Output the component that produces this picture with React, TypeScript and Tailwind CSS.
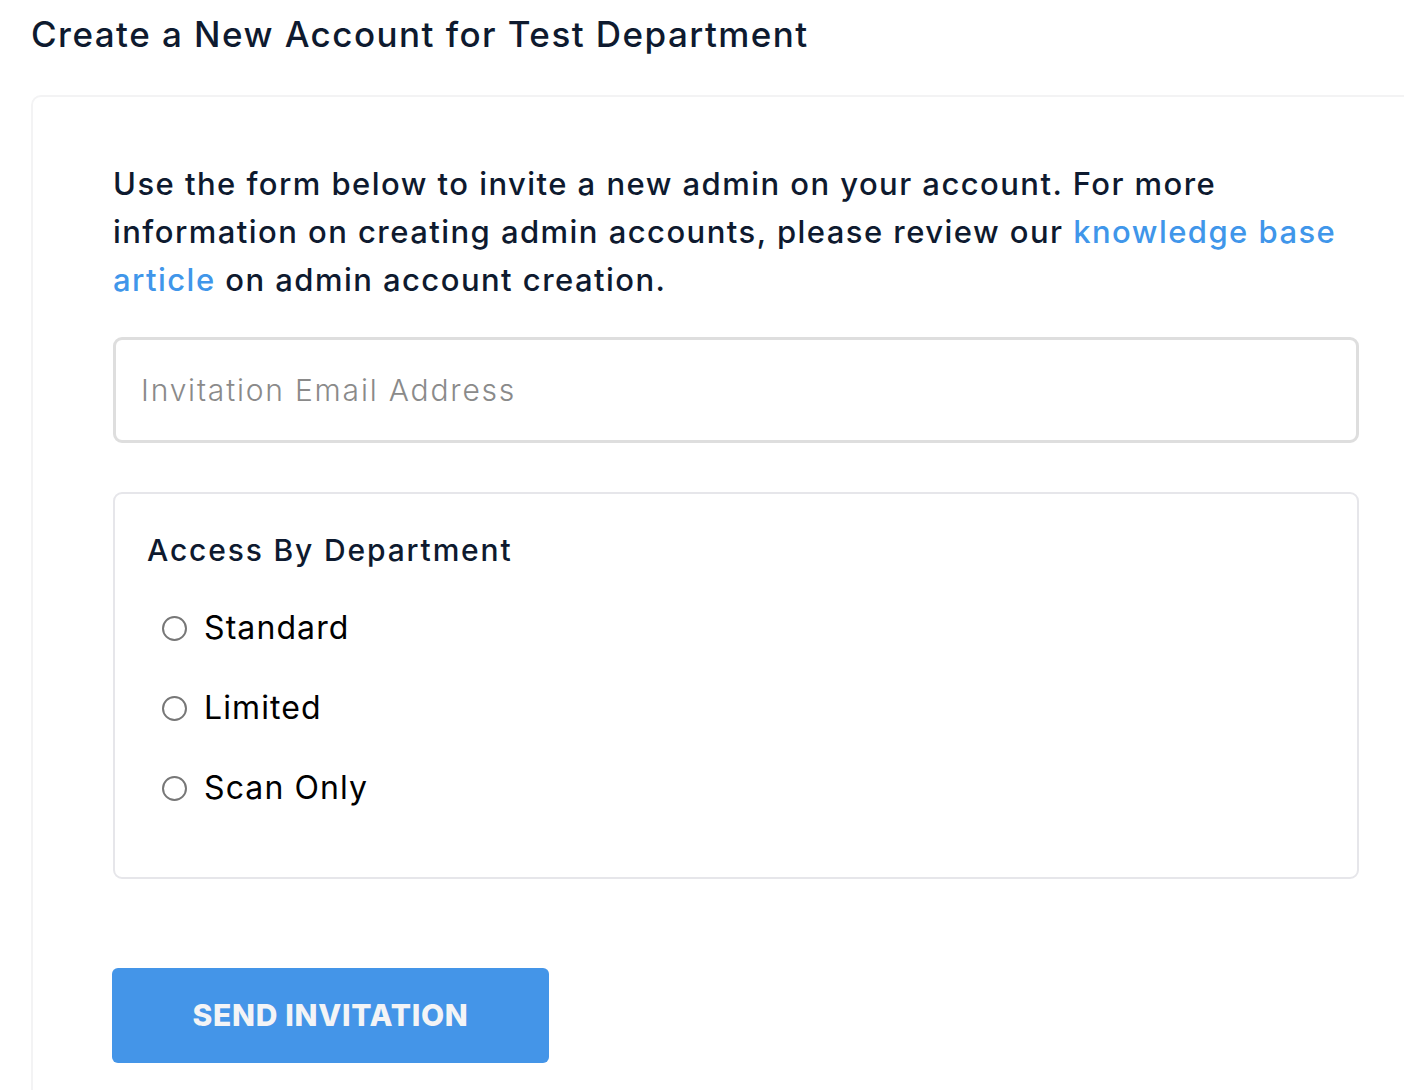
import { useState } from "react";

const OPTIONS = ["Standard", "Limited", "Scan Only"];

export default function App() {
  const [access, setAccess] = useState<string | null>(null);

  return (
    <div className="min-h-screen w-full overflow-hidden bg-white font-['Inter',sans-serif] text-[#0e1a2f]">
      <div className="pl-[31px] pt-[13px]">
        <h1 className="text-[35px] font-medium leading-[42px] tracking-[1.45px]">
          Create a New Account for Test Department
        </h1>
        <div className="mt-[40px] w-[1420px] rounded-[10px] border-2 border-[#f3f3f4] pl-[80px] pt-[63px] pb-[40px]">
          <div className="w-[1246px]">
            <p className="whitespace-nowrap text-[31px] font-medium leading-[48px] tracking-[1.45px]">
              Use the form below to invite a new admin on your account. For more
              <br />
              information on creating admin accounts, please review our{" "}
              <a href="#" className="text-[#4096ea]">
                knowledge base
                <br />
                article
              </a>{" "}
              on admin account creation.
            </p>
            <input
              type="email"
              placeholder="Invitation Email Address"
              className="mt-[33px] h-[106px] w-full rounded-[9px] border-[3px] border-[#dedede] px-[25px] text-[30px] font-light tracking-[1.8px] text-[#333] outline-none placeholder:text-[#8a8a8a]"
            />
            <div className="mt-[49px] rounded-[9px] border-2 border-[#e6e6ea] pl-[32px] pt-[36px] pb-[49px]">
              <div className="text-[30px] font-medium leading-[40px] tracking-[1.85px]">
                Access By Department
              </div>
              <div className="mt-[18px] flex flex-col">
                {OPTIONS.map((o) => (
                  <label
                    key={o}
                    className="flex h-[80px] cursor-pointer items-center pl-[15px]"
                    onClick={() => setAccess(o)}
                  >
                    <span className="flex h-[25px] w-[25px] items-center justify-center rounded-full border-2 border-[#777]">
                      {access === o && (
                        <span className="h-[13px] w-[13px] rounded-full bg-[#4096ea]" />
                      )}
                    </span>
                    <span className="ml-[17px] text-[32px] leading-[40px] tracking-[1.1px] text-black">
                      {o}
                    </span>
                  </label>
                ))}
              </div>
            </div>
            <button className="mt-[89px] ml-[-1px] flex h-[95px] w-[437px] items-center justify-center rounded-[6px] bg-[#4495e8] text-[30px] font-extrabold tracking-[0.7px] text-[#f3f4f6]">
              SEND INVITATION
            </button>
          </div>
        </div>
      </div>
    </div>
  );
}
